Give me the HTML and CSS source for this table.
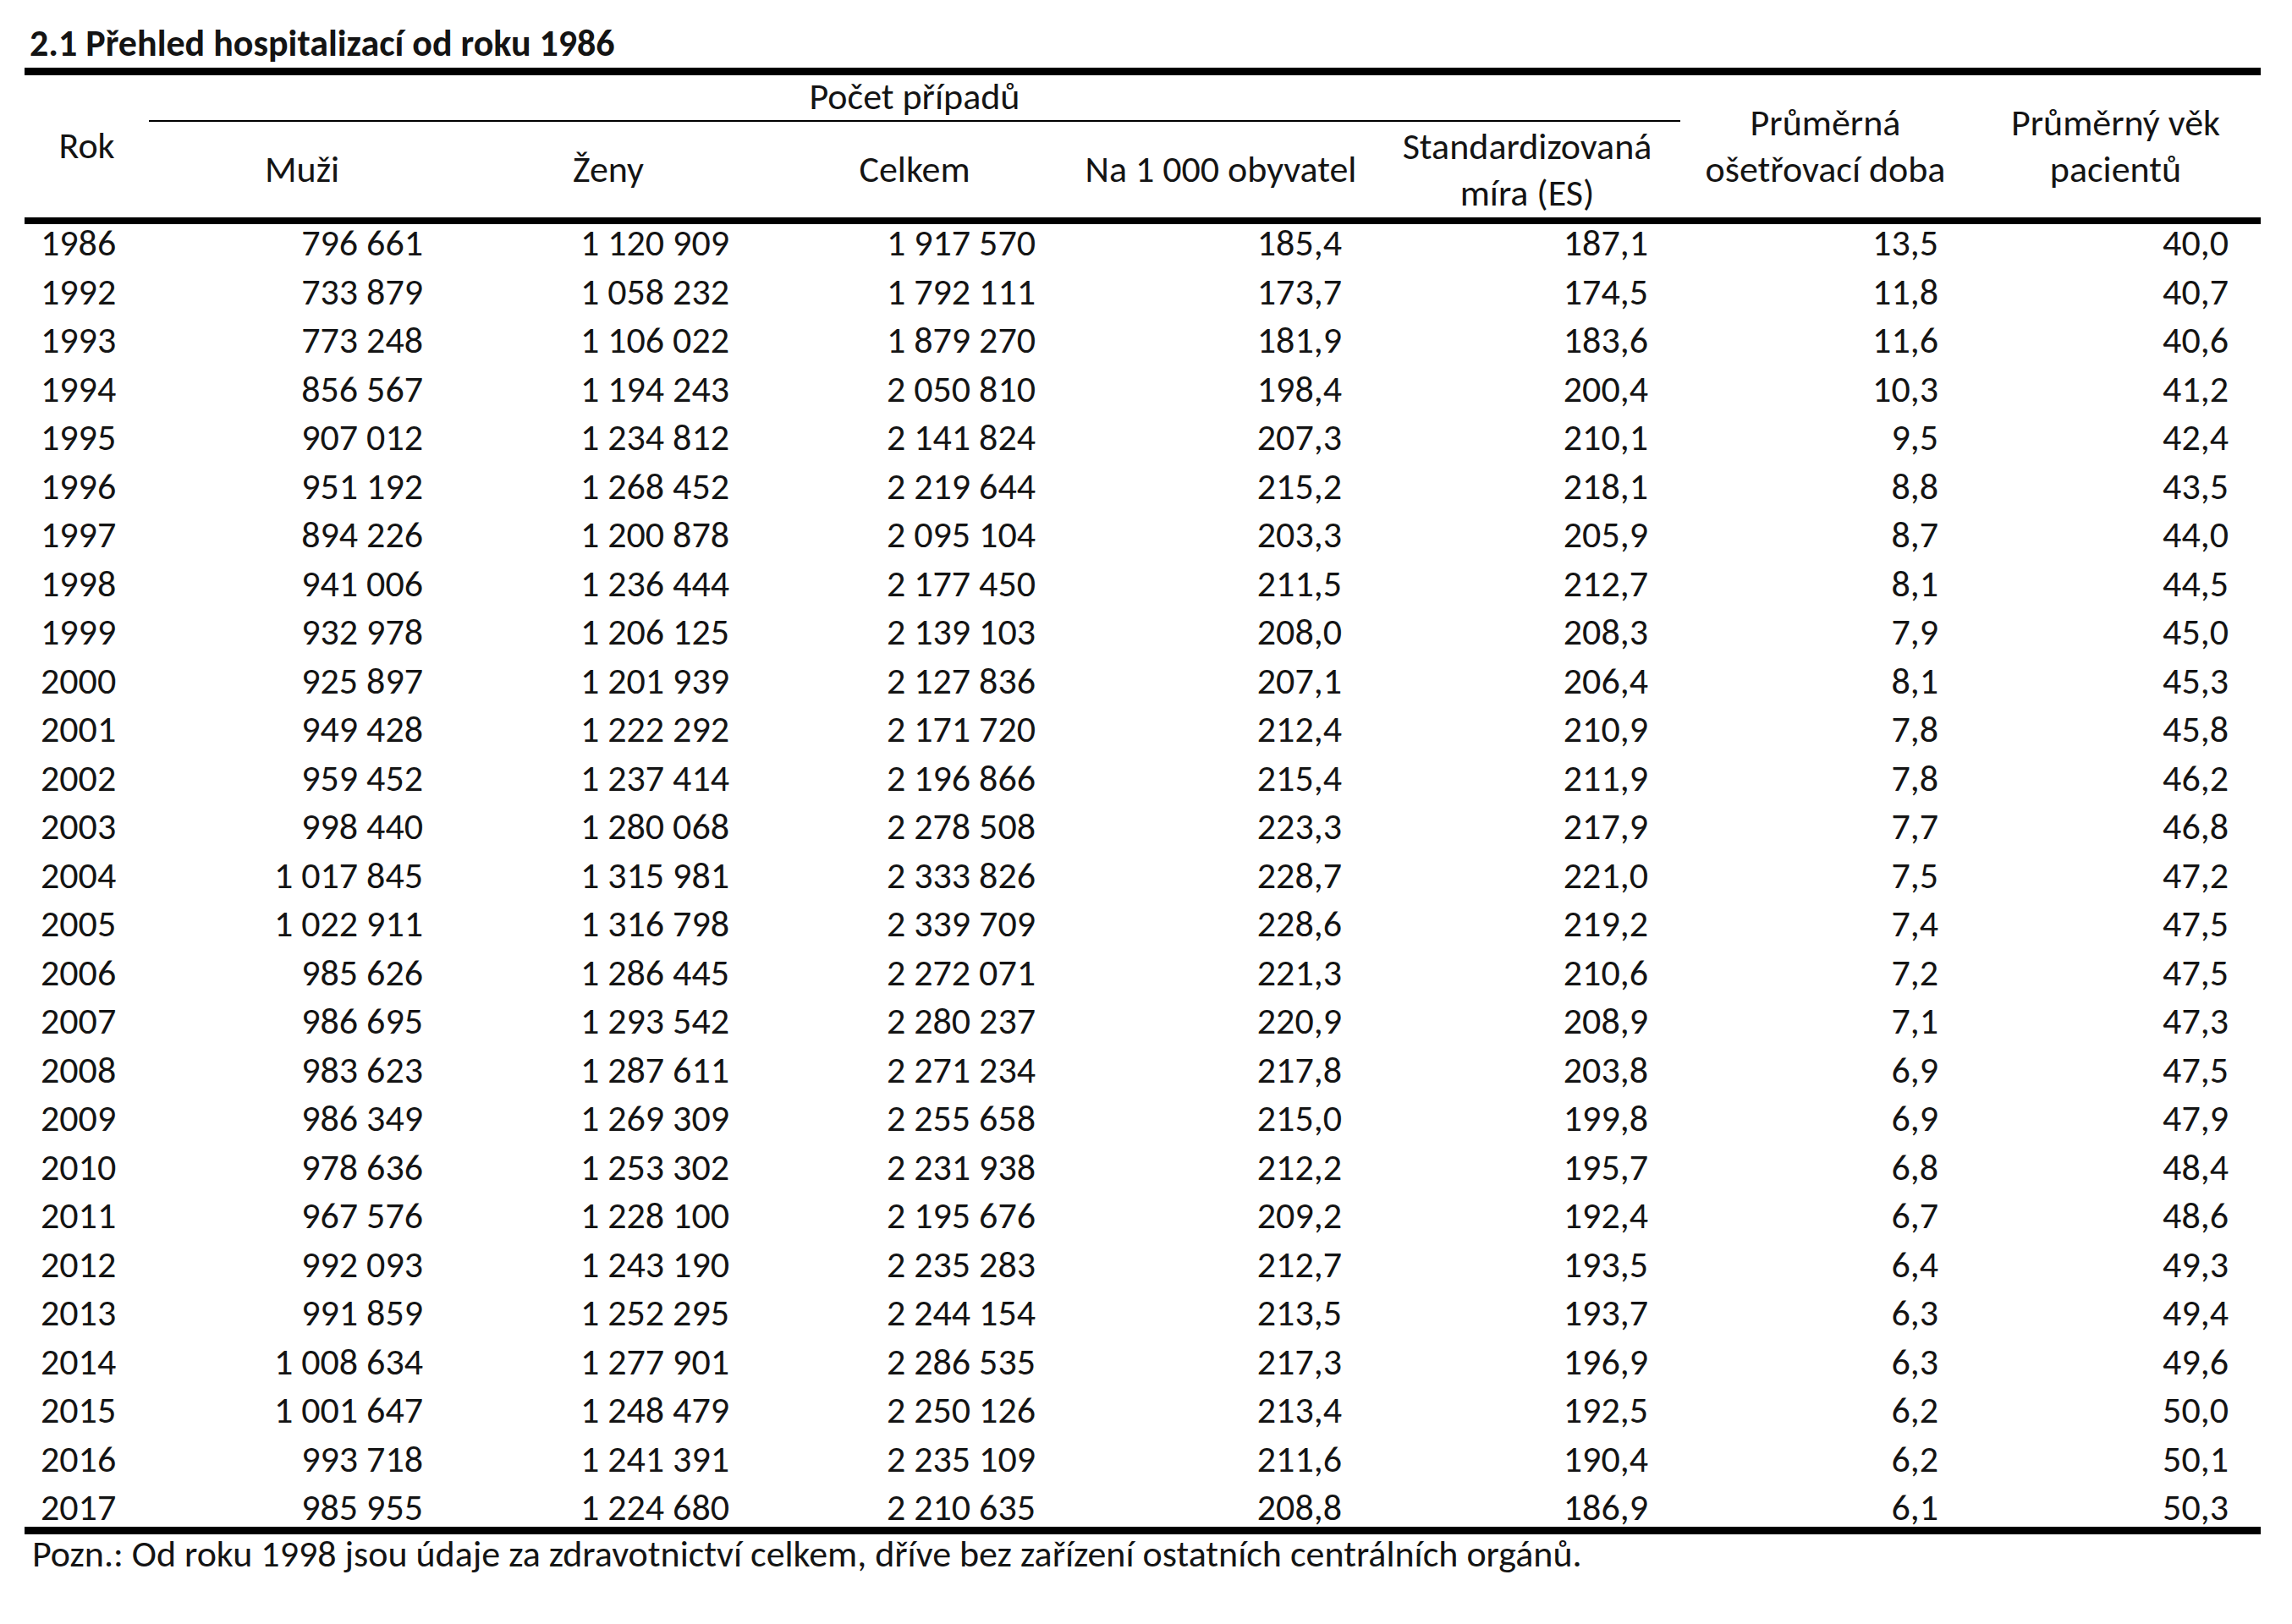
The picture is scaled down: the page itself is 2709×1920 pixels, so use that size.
FILE: index.html
```html
<!DOCTYPE html>
<html lang="cs">
<head>
  <meta charset="UTF-8">
  <title>2.1 Přehled hospitalizací od roku 1986</title>
  <link rel="stylesheet" href="styles.css">
</head>
<body>

  <h1 class="nadpis">2.1 Přehled hospitalizací od roku 1986</h1>

  <table class="prehled">
    <colgroup>
      <col class="sl-rok">
      <col class="sl-pocet">
      <col class="sl-pocet">
      <col class="sl-pocet">
      <col class="sl-pocet">
      <col class="sl-pocet">
      <col class="sl-prumer">
      <col class="sl-prumer">
    </colgroup>
    <thead>
      <tr class="hlavicka-1">
        <th rowspan="2" class="rok">Rok</th>
        <th colspan="5" class="skupina">Počet případů</th>
        <th rowspan="2">Průměrná<br>ošetřovací doba</th>
        <th rowspan="2">Průměrný věk<br>pacientů</th>
      </tr>
      <tr class="hlavicka-2">
        <th>Muži</th>
        <th>Ženy</th>
        <th>Celkem</th>
        <th>Na 1 000 obyvatel</th>
        <th class="dvouradek">Standardizovaná<br>míra (ES)</th>
      </tr>
    </thead>
    <tbody>
      <tr><td>1986</td><td>796 661</td><td>1 120 909</td><td>1 917 570</td><td>185,4</td><td>187,1</td><td>13,5</td><td>40,0</td></tr>
      <tr><td>1992</td><td>733 879</td><td>1 058 232</td><td>1 792 111</td><td>173,7</td><td>174,5</td><td>11,8</td><td>40,7</td></tr>
      <tr><td>1993</td><td>773 248</td><td>1 106 022</td><td>1 879 270</td><td>181,9</td><td>183,6</td><td>11,6</td><td>40,6</td></tr>
      <tr><td>1994</td><td>856 567</td><td>1 194 243</td><td>2 050 810</td><td>198,4</td><td>200,4</td><td>10,3</td><td>41,2</td></tr>
      <tr><td>1995</td><td>907 012</td><td>1 234 812</td><td>2 141 824</td><td>207,3</td><td>210,1</td><td>9,5</td><td>42,4</td></tr>
      <tr><td>1996</td><td>951 192</td><td>1 268 452</td><td>2 219 644</td><td>215,2</td><td>218,1</td><td>8,8</td><td>43,5</td></tr>
      <tr><td>1997</td><td>894 226</td><td>1 200 878</td><td>2 095 104</td><td>203,3</td><td>205,9</td><td>8,7</td><td>44,0</td></tr>
      <tr><td>1998</td><td>941 006</td><td>1 236 444</td><td>2 177 450</td><td>211,5</td><td>212,7</td><td>8,1</td><td>44,5</td></tr>
      <tr><td>1999</td><td>932 978</td><td>1 206 125</td><td>2 139 103</td><td>208,0</td><td>208,3</td><td>7,9</td><td>45,0</td></tr>
      <tr><td>2000</td><td>925 897</td><td>1 201 939</td><td>2 127 836</td><td>207,1</td><td>206,4</td><td>8,1</td><td>45,3</td></tr>
      <tr><td>2001</td><td>949 428</td><td>1 222 292</td><td>2 171 720</td><td>212,4</td><td>210,9</td><td>7,8</td><td>45,8</td></tr>
      <tr><td>2002</td><td>959 452</td><td>1 237 414</td><td>2 196 866</td><td>215,4</td><td>211,9</td><td>7,8</td><td>46,2</td></tr>
      <tr><td>2003</td><td>998 440</td><td>1 280 068</td><td>2 278 508</td><td>223,3</td><td>217,9</td><td>7,7</td><td>46,8</td></tr>
      <tr><td>2004</td><td>1 017 845</td><td>1 315 981</td><td>2 333 826</td><td>228,7</td><td>221,0</td><td>7,5</td><td>47,2</td></tr>
      <tr><td>2005</td><td>1 022 911</td><td>1 316 798</td><td>2 339 709</td><td>228,6</td><td>219,2</td><td>7,4</td><td>47,5</td></tr>
      <tr><td>2006</td><td>985 626</td><td>1 286 445</td><td>2 272 071</td><td>221,3</td><td>210,6</td><td>7,2</td><td>47,5</td></tr>
      <tr><td>2007</td><td>986 695</td><td>1 293 542</td><td>2 280 237</td><td>220,9</td><td>208,9</td><td>7,1</td><td>47,3</td></tr>
      <tr><td>2008</td><td>983 623</td><td>1 287 611</td><td>2 271 234</td><td>217,8</td><td>203,8</td><td>6,9</td><td>47,5</td></tr>
      <tr><td>2009</td><td>986 349</td><td>1 269 309</td><td>2 255 658</td><td>215,0</td><td>199,8</td><td>6,9</td><td>47,9</td></tr>
      <tr><td>2010</td><td>978 636</td><td>1 253 302</td><td>2 231 938</td><td>212,2</td><td>195,7</td><td>6,8</td><td>48,4</td></tr>
      <tr><td>2011</td><td>967 576</td><td>1 228 100</td><td>2 195 676</td><td>209,2</td><td>192,4</td><td>6,7</td><td>48,6</td></tr>
      <tr><td>2012</td><td>992 093</td><td>1 243 190</td><td>2 235 283</td><td>212,7</td><td>193,5</td><td>6,4</td><td>49,3</td></tr>
      <tr><td>2013</td><td>991 859</td><td>1 252 295</td><td>2 244 154</td><td>213,5</td><td>193,7</td><td>6,3</td><td>49,4</td></tr>
      <tr><td>2014</td><td>1 008 634</td><td>1 277 901</td><td>2 286 535</td><td>217,3</td><td>196,9</td><td>6,3</td><td>49,6</td></tr>
      <tr><td>2015</td><td>1 001 647</td><td>1 248 479</td><td>2 250 126</td><td>213,4</td><td>192,5</td><td>6,2</td><td>50,0</td></tr>
      <tr><td>2016</td><td>993 718</td><td>1 241 391</td><td>2 235 109</td><td>211,6</td><td>190,4</td><td>6,2</td><td>50,1</td></tr>
      <tr><td>2017</td><td>985 955</td><td>1 224 680</td><td>2 210 635</td><td>208,8</td><td>186,9</td><td>6,1</td><td>50,3</td></tr>
    </tbody>
  </table>

  <p class="poznamka">Pozn.: Od roku 1998 jsou údaje za zdravotnictví celkem, dříve bez zařízení ostatních centrálních orgánů.</p>

</body>
</html>
```

FILE: styles.css
```css
body {
  margin: 0;
  padding: 28px 38px 0 29px;
  font-family: "Carlito", "Lato", sans-serif;
  color: #141414;
  background: #fff;
}

.nadpis {
  margin: 0 0 6px 6px;
  font-size: 44px;
  line-height: 46px;
  font-weight: bold;
}

.prehled {
  width: 2642px;
  border-collapse: collapse;
  table-layout: fixed;
  border-top: 9px solid #000;
  font-size: 44px;
}

.sl-rok {
  width: 147px;
}

.sl-pocet {
  width: 362px;
}

.sl-prumer {
  width: 343px;
}

th {
  font-weight: normal;
  text-align: center;
  line-height: 55px;
  padding: 0;
  white-space: nowrap;
}

thead th {
  border-bottom: 8px solid #000;
}

thead th.skupina {
  border-bottom: 2px solid #000;
  height: 53px;
  line-height: 50px;
  vertical-align: top;
}

.hlavicka-2 th {
  height: 113px;
}

th.rok {
  padding-bottom: 2px;
}

td {
  height: 57.5px;
  padding: 0 38px 0 0;
  text-align: right;
  vertical-align: top;
  line-height: 44px;
  white-space: nowrap;
}

td:first-child {
  text-align: left;
  padding: 0 0 0 19px;
}

tbody tr:last-child td {
  height: 45px;
  border-bottom: 9px solid #000;
}

.poznamka {
  margin: 0 0 0 9px;
  font-size: 44px;
  line-height: 46px;
}
```
